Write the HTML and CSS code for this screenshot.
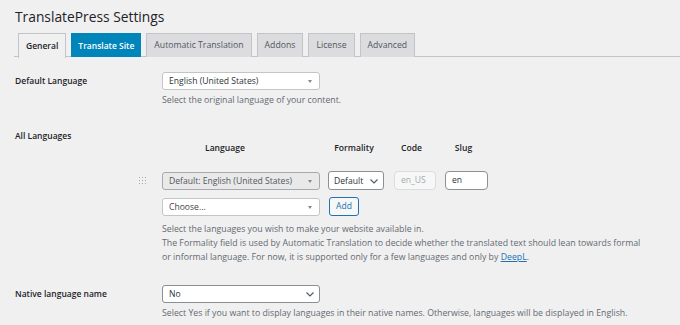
FILE: index.html
```html
<!DOCTYPE html>
<html lang="en">
<head>
<meta charset="utf-8">
<title>TranslatePress Settings</title>
<link rel="stylesheet" href="styles.css">
</head>
<body>
<div class="wrap">
  <h1 class="title">TranslatePress Settings</h1>
  <nav class="tabs">
    <a class="tab tab-active">General</a>
    <a class="tab tab-blue">Translate Site</a>
    <a class="tab">Automatic Translation</a>
    <a class="tab">Addons</a>
    <a class="tab">License</a>
    <a class="tab">Advanced</a>
  </nav>

  <div class="row row-default">
    <div class="label label-mid">Default Language</div>
    <div class="field">
      <div class="s2 s2-wide">
        <span class="s2-text">English (United States)</span>
        <span class="tri"></span>
      </div>
      <p class="desc desc-single">Select the original language of your content.</p>
    </div>
  </div>

  <div class="row row-all">
    <div class="label label-top">All Languages</div>
    <div class="field">
      <div class="lang-table">
        <div class="lt-head">
          <span class="h-handle"></span>
          <span class="h-lang">Language</span>
          <span class="h-form">Formality</span>
          <span class="h-code">Code</span>
          <span class="h-slug">Slug</span>
        </div>
        <div class="lt-row">
          <span class="handle">
            <svg width="7" height="7" viewBox="0 0 7 7"><g fill="#a7aaad"><rect x="0" y="0" width="1" height="1"/><rect x="3" y="0" width="1" height="1"/><rect x="6" y="0" width="1" height="1"/><rect x="0" y="3" width="1" height="1"/><rect x="3" y="3" width="1" height="1"/><rect x="6" y="3" width="1" height="1"/><rect x="0" y="6" width="1" height="1"/><rect x="3" y="6" width="1" height="1"/><rect x="6" y="6" width="1" height="1"/></g></svg>
          </span>
          <div class="c-lang">
            <div class="s2 s2-wide s2-disabled">
              <span class="s2-text">Default: English (United States)</span>
              <span class="tri"></span>
            </div>
          </div>
          <div class="c-form">
            <div class="nsel nsel-form">
              <span class="nsel-text">Default</span>
              <svg class="chev" width="8" height="5" viewBox="0 0 8 5"><polyline points="0.5,0.5 4,4 7.5,0.5" fill="none" stroke="#50575e" stroke-width="1.1"/></svg>
            </div>
          </div>
          <div class="c-code"><div class="inp inp-disabled">en_US</div></div>
          <div class="c-slug"><div class="inp">en</div></div>
        </div>
        <div class="add-row">
          <div class="s2 s2-choose">
            <span class="s2-text">Choose...</span>
            <span class="tri"></span>
          </div>
          <button class="btn-add">Add</button>
        </div>
      </div>
      <div class="desc desc-multi">
        <p>Select the languages you wish to make your website available in.</p>
        <p><span>The Formality field is used by Automatic Translation to decide whether the translated text should lean towards formal</span> <span>or informal language. For now, it is supported only for a few languages and only by</span> <a class="link">DeepL</a><span>.</span></p>
      </div>
    </div>
  </div>

  <div class="row row-native">
    <div class="label label-mid">Native language name</div>
    <div class="field">
      <div class="nsel nsel-wide">
        <span class="nsel-text">No</span>
        <svg class="chev" width="8" height="5" viewBox="0 0 8 5"><polyline points="0.5,0.5 4,4 7.5,0.5" fill="none" stroke="#50575e" stroke-width="1.1"/></svg>
      </div>
      <p class="desc desc-single">Select Yes if you want to display languages in their native names. Otherwise, languages will be displayed in English.</p>
    </div>
  </div>
</div>
</body>
</html>
```

FILE: styles.css
```css
* { box-sizing: border-box; }
html, body { margin: 0; padding: 0; }
body {
  background: #f0f0f1;
  font-family: "Open Sans", "Noto Sans", sans-serif;
  font-size: 8.6px;
  color: #1d2327;
  width: 680px;
  height: 325px;
  overflow: hidden;
}
.wrap { padding-left: 14px; }
p { margin: 0; }

.title {
  margin: 0;
  padding: 8px 0 0 1px;
  font-size: 13.8px;
  line-height: 18px;
  font-weight: 400;
  color: #1d2327;
}

.tabs {
  margin-top: 7px;
  display: flex;
  gap: 5px;
  padding-left: 4px;
  border-bottom: 1px solid #c3c4c7;
  height: 24px;
}
.tab {
  height: 24px;
  padding: 0 7px;
  border: 1px solid #c3c4c7;
  border-bottom: none;
  background: #dcdcde;
  color: #50575e;
  font-size: 8.7px;
  font-weight: 400;
  line-height: 23px;
  white-space: nowrap;
}
.tab-active {
  background: #f0f0f1;
  color: #1d2327;
  height: 25px;
  font-weight: 600;
  font-size: 8.5px;
}
.tab-blue {
  background: #0085ba;
  border-color: #0085ba;
  color: #fff;
  font-weight: 600;
  font-size: 8.5px;
  padding: 0 6px;
}

.row {
  display: grid;
  grid-template-columns: 147px 1fr;
  align-items: start;
  padding-left: 1px;
}
.label {
  font-weight: 600;
  color: #1d2327;
  font-size: 8.5px;
}
.label-mid { line-height: 18px; }
.label-top { line-height: 14px; }

.row-default { padding-top: 15px; }
.row-all { padding-top: 22px; }
.row-native { padding-top: 21px; }

.desc { color: #646970; line-height: 14px; font-size: 8.75px; }
.desc-single { margin-top: 3px; }
.desc-multi { margin-top: 6px; max-width: 485px; }
.link { color: #2271b1; text-decoration: underline; }

/* select2-like */
.s2 {
  position: relative;
  height: 18px;
  border: 1px solid #c3c4c7;
  border-radius: 3px;
  background: #fff;
  display: flex;
  align-items: center;
  padding-left: 6px;
  color: #2c3338;
  line-height: 16px;
}
.s2-wide { width: 158px; }
.s2-choose { width: 158px; color: #444; }
.s2-disabled { background: #e9e9ea; border-color: #a7aaad; color: #50575e; }
.tri {
  position: absolute;
  right: 7px;
  top: 7px;
  width: 0; height: 0;
  border-left: 2.5px solid transparent;
  border-right: 2.5px solid transparent;
  border-top: 3px solid #888;
}

/* native selects */
.nsel {
  position: relative;
  height: 19px;
  border: 1px solid #8c8f94;
  border-radius: 3px;
  background: #fff;
  display: flex;
  align-items: center;
  color: #2c3338;
  padding-left: 6px;
}
.nsel .chev { position: absolute; top: 7px; }
.nsel-wide { width: 158px; height: 18px; }
.nsel-wide .chev { right: 5px; top: 6px; }
.nsel-form { width: 56px; padding-left: 5px; }
.nsel-form .chev { right: 5px; }

/* language table */
.lang-table { margin-top: 12px; margin-left: -27px; }
.lt-head {
  display: grid;
  grid-template-columns: 27px 166px 66px 51px 43px;
  line-height: 14px;
  font-weight: 600;
  color: #1d2327;
}
.lt-head span { text-align: center; }
.h-lang { padding-right: 40px; }
.h-form { padding-right: 14px; }
.h-code { padding-right: 16px; }
.h-slug { padding-right: 6px; }

.lt-row {
  display: grid;
  grid-template-columns: 27px 166px 66px 51px 43px;
  align-items: center;
  margin-top: 16px;
}
.handle { display: flex; padding-left: 4px; }
.handle svg { display: block; }
.inp {
  height: 19px;
  border: 1px solid #8c8f94;
  border-radius: 4px;
  background: #fff;
  padding-left: 6px;
  line-height: 17px;
  color: #2c3338;
}
.c-code .inp { width: 42px; }
.c-slug .inp { width: 43px; }
.inp-disabled { background: #f6f7f7; border-color: #dcdcde; color: #a7aaad; }

.add-row {
  display: flex;
  align-items: center;
  gap: 9px;
  margin-top: 7px;
  margin-left: 27px;
}
.btn-add {
  height: 19px;
  width: 30px;
  padding: 0;
  border: 1px solid #2271b1;
  border-radius: 3px;
  background: #f6f7f7;
  color: #2271b1;
  font-family: inherit;
  font-size: 8.6px;
  line-height: 17px;
}
```
